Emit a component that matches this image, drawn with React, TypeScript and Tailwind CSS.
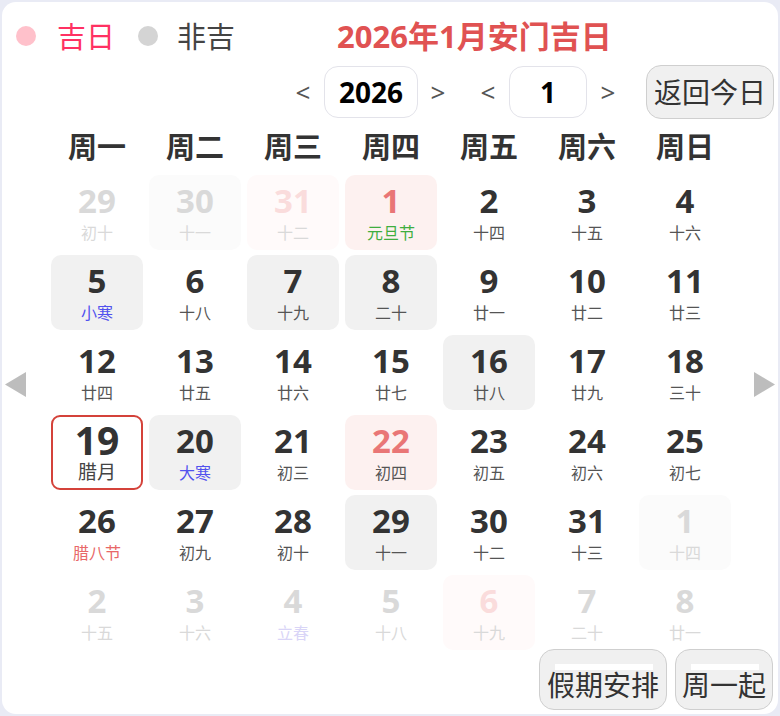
import React from "react";

type Day = {
  n: number;
  lunar: string;
  other?: boolean;
  bg?: "gray" | "pink" | "fgray" | "fpink";
  lunarColor?: string;
  red?: boolean;
  today?: boolean;
};

const days: Day[] = [
  { n: 29, lunar: "初十", other: true },
  { n: 30, lunar: "十一", other: true, bg: "fgray" },
  { n: 31, lunar: "十二", other: true, bg: "fpink", red: true },
  { n: 1, lunar: "元旦节", bg: "pink", red: true, lunarColor: "text-[#3fae3f]" },
  { n: 2, lunar: "十四" },
  { n: 3, lunar: "十五" },
  { n: 4, lunar: "十六" },

  { n: 5, lunar: "小寒", bg: "gray", lunarColor: "text-[#5252ee]" },
  { n: 6, lunar: "十八" },
  { n: 7, lunar: "十九", bg: "gray" },
  { n: 8, lunar: "二十", bg: "gray" },
  { n: 9, lunar: "廿一" },
  { n: 10, lunar: "廿二" },
  { n: 11, lunar: "廿三" },

  { n: 12, lunar: "廿四" },
  { n: 13, lunar: "廿五" },
  { n: 14, lunar: "廿六" },
  { n: 15, lunar: "廿七" },
  { n: 16, lunar: "廿八", bg: "gray" },
  { n: 17, lunar: "廿九" },
  { n: 18, lunar: "三十" },

  { n: 19, lunar: "腊月", today: true },
  { n: 20, lunar: "大寒", bg: "gray", lunarColor: "text-[#5252ee]" },
  { n: 21, lunar: "初三" },
  { n: 22, lunar: "初四", bg: "pink", red: true },
  { n: 23, lunar: "初五" },
  { n: 24, lunar: "初六" },
  { n: 25, lunar: "初七" },

  { n: 26, lunar: "腊八节", lunarColor: "text-[#e86868]" },
  { n: 27, lunar: "初九" },
  { n: 28, lunar: "初十" },
  { n: 29, lunar: "十一", bg: "gray" },
  { n: 30, lunar: "十二" },
  { n: 31, lunar: "十三" },
  { n: 1, lunar: "十四", other: true, bg: "fgray" },

  { n: 2, lunar: "十五", other: true },
  { n: 3, lunar: "十六", other: true },
  { n: 4, lunar: "立春", other: true, lunarColor: "text-[#d9d5f7]" },
  { n: 5, lunar: "十八", other: true },
  { n: 6, lunar: "十九", other: true, bg: "fpink", red: true },
  { n: 7, lunar: "二十", other: true },
  { n: 8, lunar: "廿一", other: true },
];

const weekdays = ["周一", "周二", "周三", "周四", "周五", "周六", "周日"];

const bgClass = {
  gray: "bg-[#f1f1f1]",
  pink: "bg-[#fdf1f0]",
  fgray: "bg-[#fbfbfb]",
  fpink: "bg-[#fffafa]",
};

const DayCell = ({ d }: { d: Day }) => {
  let numColor = "text-[#333333]";
  if (d.red) numColor = d.other ? "text-[#fadcdc]" : "text-[#e97676]";
  else if (d.other) numColor = "text-[#d9d9d9]";

  const lunarColor = d.lunarColor ?? (d.other ? "text-[#d9d9d9]" : "text-[#555555]");

  if (d.today) {
    return (
      <div className="h-[75px] rounded-[9px] border-2 border-[#d4423a] flex flex-col items-center pt-[3px]">
        <span className="text-[39px] leading-[40px] font-bold text-[#333333]">{d.n}</span>
        <span className="text-[19px] leading-[24px] text-[#444444]">{d.lunar}</span>
      </div>
    );
  }

  return (
    <div
      className={`h-[75px] rounded-[10px] flex flex-col items-center pt-[7px] ${
        d.bg ? bgClass[d.bg] : ""
      }`}
    >
      <span className={`text-[33px] leading-[38px] font-bold ${numColor}`}>{d.n}</span>
      <span className={`text-[16px] leading-[20px] mt-[3px] ${lunarColor}`}>{d.lunar}</span>
    </div>
  );
};

const Chevron = ({ c }: { c: string }) => (
  <span className="w-[28px] text-center text-[26px] leading-none text-[#555555]">{c}</span>
);

const Triangle = ({ dir }: { dir: "left" | "right" }) => (
  <svg width="21" height="25" viewBox="0 0 21 25">
    <polygon
      points={dir === "left" ? "21,0 21,25 0,12.5" : "0,0 0,25 21,12.5"}
      fill="#bdbdbd"
    />
  </svg>
);

export default function App() {
  return (
    <div
      className="w-[780px] h-[716px] bg-[#e9ebf5] p-[2px]"
      style={{ fontFamily: '"Noto Sans", "Noto Sans CJK SC", sans-serif' }}
    >
      <div className="w-full h-full bg-white rounded-[14px] flex flex-col">
        {/* legend + title */}
        <div className="h-[48px] mt-[10px] flex items-center pl-[14px]">
          <span className="w-[20px] h-[20px] rounded-full bg-[#ffc1cb]" />
          <span className="ml-[21px] text-[29px] leading-none text-[#ff3162]">吉日</span>
          <span className="ml-[23px] w-[20px] h-[20px] rounded-full bg-[#d4d4d4]" />
          <span className="ml-[19px] text-[29px] leading-none text-[#444444]">非吉</span>
          <span className="ml-[102px] text-[31px] leading-none font-bold text-[#e05252]">
            2026年1月安门吉日
          </span>
        </div>

        {/* nav */}
        <div className="h-[54px] mt-[5px] flex items-center justify-end pr-[4px]">
          <Chevron c="<" />
          <div className="ml-[7px] w-[94px] h-[52px] rounded-[14px] border border-[#e3e3ea] flex items-center justify-center text-[28px] font-bold text-black">
            2026
          </div>
          <span className="ml-[6px]" />
          <Chevron c=">" />
          <span className="ml-[22px]" />
          <Chevron c="<" />
          <div className="ml-[7px] w-[78px] h-[52px] rounded-[14px] border border-[#e3e3ea] flex items-center justify-center text-[28px] font-bold text-black">
            1
          </div>
          <span className="ml-[7px]" />
          <Chevron c=">" />
          <button className="ml-[24px] w-[128px] h-[54px] rounded-[15px] border border-[#cfcfcf] bg-[#f0f0f0] text-[28px] text-[#333333] flex items-center justify-center">
            返回今日
          </button>
        </div>

        {/* calendar body with side arrows */}
        <div className="flex">
          <div className="w-[49px] flex items-center pl-[3px]">
            <Triangle dir="left" />
          </div>
          <div className="w-[680px]">
            <div className="h-[56px] grid grid-cols-7 gap-x-[6px] items-center">
              {weekdays.map((w) => (
                <div key={w} className="text-center text-[29px] font-bold text-[#333333]">
                  {w}
                </div>
              ))}
            </div>
            <div className="grid grid-cols-7 gap-x-[6px] gap-y-[5px]">
              {days.map((d, i) => (
                <DayCell key={i} d={d} />
              ))}
            </div>
          </div>
          <div className="w-[47px] flex items-center justify-end pr-[3px]">
            <Triangle dir="right" />
          </div>
        </div>

        {/* bottom buttons */}
        <div className="flex justify-end gap-[8px] pr-[5px] mt-[-1px]">
          <button className="relative w-[128px] h-[61px] rounded-[15px] border border-[#cfcfcf] bg-[#f0f0f0] text-[28px] text-[#333333] flex items-center justify-center pt-[10px]">
            <span className="absolute left-[15px] top-[14px] w-[98px] h-[6px] bg-white" />
            <span className="relative">假期安排</span>
          </button>
          <button className="relative w-[98px] h-[61px] rounded-[15px] border border-[#cfcfcf] bg-[#f0f0f0] text-[28px] text-[#333333] flex items-center justify-center pt-[10px]">
            <span className="absolute left-[15px] top-[14px] w-[68px] h-[6px] bg-white" />
            <span className="relative">周一起</span>
          </button>
        </div>
      </div>
    </div>
  );
}
